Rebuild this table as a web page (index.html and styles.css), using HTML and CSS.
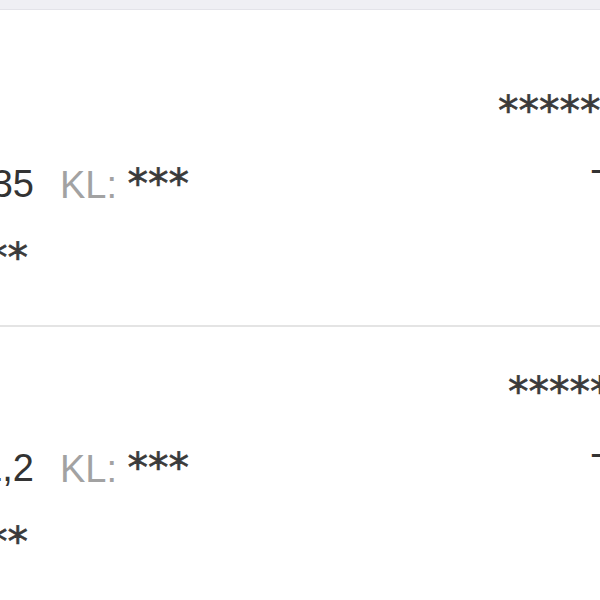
FILE: index.html
```html
<!DOCTYPE html>
<html lang="vi">
<head>
<meta charset="utf-8">
<title>List</title>
<link rel="stylesheet" href="styles.css">
</head>
<body>
<div class="screen">
  <div class="topband"></div>
  <div class="item item-first">
    <div class="line-top"><span class="stars">*****</span></div>
    <div class="line-main">
      <div class="num"><span>1,235</span></div>
      <div class="kl"><span class="kl-label">KL:</span> <span class="stars">***</span></div>
      <div class="spacer"></div>
      <div class="side">T</div>
    </div>
    <div class="line-bottom"><div class="tail"><span class="stars">****</span></div></div>
  </div>
  <div class="divider"></div>
  <div class="item item-second">
    <div class="line-top line-top-narrow"><span class="stars">*****</span></div>
    <div class="line-main">
      <div class="num"><span>1,2</span></div>
      <div class="kl"><span class="kl-label">KL:</span> <span class="stars">***</span></div>
      <div class="spacer"></div>
      <div class="side">T</div>
    </div>
    <div class="line-bottom"><div class="tail"><span class="stars">****</span></div></div>
  </div>
</div>
</body>
</html>
```
FILE: styles.css
```css
html, body {
  margin: 0;
  padding: 0;
  background: #ffffff;
}
body {
  width: 600px;
  height: 600px;
  overflow: hidden;
  font-family: "Liberation Sans", Arial, sans-serif;
  color: #333333;
}
.screen {
  width: 600px;
  display: flex;
  flex-direction: column;
}
.topband {
  height: 9px;
  background: #efeff4;
  border-bottom: 1px solid #e3e3e9;
}
.item {
  display: flex;
  flex-direction: column;
}
.item-first {
  padding-top: 81px;
  padding-bottom: 47px;
}
.item-second {
  padding-top: 45px;
}
.divider {
  height: 2px;
  background: #e4e4e4;
}
.stars {
  font-family: "DejaVu Sans", sans-serif;
  font-size: 41px;
  color: #3a3a3a;
  -webkit-text-stroke: 0.6px #3a3a3a;
}
.line-top {
  height: 40px;
  line-height: 40px;
  padding-left: 498px;
  white-space: nowrap;
}
.line-top-narrow {
  padding-left: 508px;
}
.line-main {
  margin-top: 31px;
  height: 44px;
  line-height: 44px;
  display: flex;
  white-space: nowrap;
  font-size: 38px;
}
.item-second .line-main {
  margin-top: 34px;
}
.num {
  width: 34px;
  flex: none;
  display: flex;
  justify-content: flex-end;
  color: #333333;
}
.kl {
  margin-left: 26px;
  flex: none;
}
.kl .stars {
  line-height: 44px;
}
.kl-label {
  color: #a2a2a2;
}
.spacer {
  flex: 1;
}
.side {
  width: 9px;
  flex: none;
  color: #333333;
  overflow: visible;
}
.line-bottom {
  margin-top: 32px;
  height: 40px;
  line-height: 40px;
  display: flex;
}
.tail {
  width: 28px;
  flex: none;
  display: flex;
  justify-content: flex-end;
  white-space: nowrap;
}
```
